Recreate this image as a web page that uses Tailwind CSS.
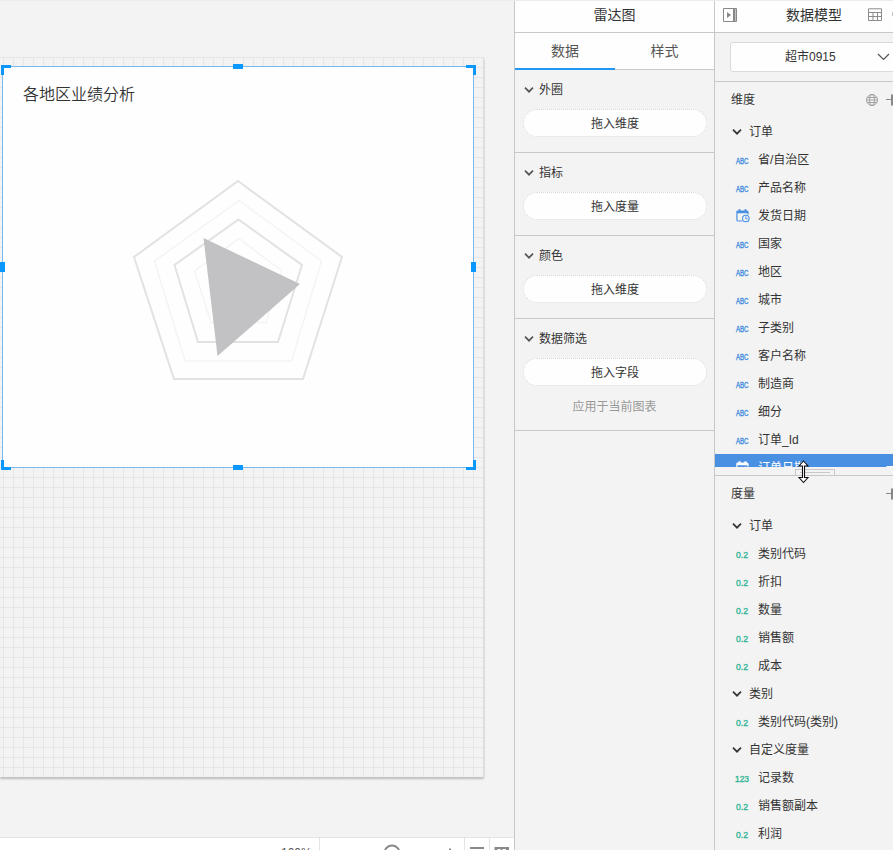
<!DOCTYPE html>
<html lang="zh-CN">
<head>
<meta charset="utf-8">
<title>雷达图</title>
<script src="https://cdn.jsdelivr.net/npm/@tailwindcss/browser@4"></script>
</head>
<body class="w-[893px] h-[850px] overflow-hidden bg-[#f3f3f3] font-['Liberation_Sans','Noto_Sans_CJK_SC',sans-serif] text-xs text-[#333]">
<svg class="hidden">
  <symbol id="chev" viewBox="0 0 10 8"><path d="M1 1.700 5 5.700 9 1.700" fill="none" stroke="currentColor" stroke-width="1.700"/></symbol>
  <symbol id="cal" viewBox="0 0 14 14"><path d="M6 12H2.200Q.9 12 .9 10.700V3Q.9 2 2 2H11Q12 2 12 3V5.500" fill="none" stroke="currentColor" stroke-width="1.200"/><path d="M1 2H12V4.300H1zM2.500.3H4.500V3H2.500zM8.500.3H10.500V3H8.500z" fill="currentColor"/><circle cx="9.800" cy="9.500" r="3.300" fill="none" stroke="currentColor" stroke-width="1.100"/><path d="M9.800 7.500V9.800H11.500" fill="none" stroke="currentColor"/></symbol>
</svg>
<div class="flex h-full border-t border-[#ececec]">
  <main class="w-[514px] shrink-0 h-[849px] flex flex-col overflow-hidden">
    <section class="relative mt-[56px] w-[484px] h-[720px] shrink-0 pt-[9px] pl-[2px] border-r border-[#dcdcdc] shadow-[0_2px_2px_rgba(0,0,0,.22)] bg-[#f3f3f3] bg-[linear-gradient(to_right,#e6e6e6_1px,transparent_1px),linear-gradient(to_bottom,#e6e6e6_1px,transparent_1px)] bg-[length:10px_10px] bg-[position:3px_0px]">
      <div class="relative w-[472px] h-[402px] bg-[#fefefe] border border-[#7ab8ee]">
        <h1 class="pl-5 pt-[16px] text-base leading-6 font-[350]">各地区业绩分析</h1>
        <svg class="block ml-[117px] mt-[63px]" width="240" height="220" viewBox="0 0 240 220" fill="none">
          <path d="M118 11 222 87 183 209H54L14 87Z" stroke="#e2e2e2" stroke-width="2"/>
          <path d="M119 30.500 201.500 91 171.500 191H65L34.500 91Z" stroke="#f3f3f3" stroke-width="1.300"/>
          <path d="M118.500 49.500 182 95 158 172H78L54.500 95Z" stroke="#e2e2e2" stroke-width="2"/>
          <path d="M119 68.500 162 101 146 152.500H91L74.500 101Z" stroke="#f3f3f3" stroke-width="1.300"/>
          <path d="M83.500 68 180 114 97.500 186Z" fill="#c2c2c4"/>
        </svg>
        <i class="absolute -left-[2px] -top-[2px] size-[10px] border-l-[3px] border-t-[3px] border-[#0a98ff]"></i>
        <i class="absolute -right-[3px] -top-[2px] size-[10px] border-r-[3px] border-t-[3px] border-[#0a98ff]"></i>
        <i class="absolute -left-[2px] -bottom-[3px] size-[10px] border-l-[3px] border-b-[3px] border-[#0a98ff]"></i>
        <i class="absolute -right-[3px] -bottom-[3px] size-[10px] border-r-[3px] border-b-[3px] border-[#0a98ff]"></i>
        <i class="absolute left-[230px] -top-[3px] w-[10px] h-[5px] bg-[#0a98ff]"></i>
        <i class="absolute left-[230px] -bottom-[3px] w-[10px] h-[5px] bg-[#0a98ff]"></i>
        <i class="absolute -left-[3px] top-[195px] w-[5px] h-[10px] bg-[#0a98ff]"></i>
        <i class="absolute -right-[3px] top-[195px] w-[5px] h-[10px] bg-[#0a98ff]"></i>
      </div>
    </section>
    <footer class="mt-auto h-[13px] shrink-0 flex bg-white border-t border-[#e3e3e3] overflow-hidden">
      <div class="w-[320px] border-r border-[#e3e3e3] pl-[281px] pt-[9px] leading-3 text-[#555]">100%</div>
      <div class="w-[145px] border-r border-[#e3e3e3]">
        <svg width="144" height="12" fill="none"><circle cx="72" cy="15" r="7.500" stroke="#8a8a8a" stroke-width="2"/><path d="M130 10.500V20" stroke="#8a8a8a" stroke-width="2"/></svg>
      </div>
      <div class="w-[25px] border-r border-[#e3e3e3]"><svg width="24" height="12"><path d="M5 9H19V11H5z" fill="#8a8a8a"/></svg></div>
      <svg width="24" height="12"><path d="M4.500 12V9H19V12H16V11H13L11.500 12.500 10 11H7.500V12z" fill="#8a8a8a"/></svg>
    </footer>
  </main>

  <aside class="w-[201px] shrink-0 h-full border-x border-[#c8c8c8]">
    <header class="h-8 bg-[#fefefe] border-b border-[#c8c8c8] text-center text-sm leading-[28px]">雷达图</header>
    <nav class="flex h-[37px] bg-[#fefefe] text-center text-sm leading-[36px] text-[#555]">
      <div class="w-[100px] border-b-2 border-[#2196f3]">数据</div>
      <div class="flex-1 border-b border-[#c8c8c8]">样式</div>
    </nav>
    <section class="h-[83px] border-b border-[#c8c8c8] pt-[10px] px-2">
      <div class="flex items-center gap-[5px] h-5 pl-px"><svg class="w-[10px] h-2 text-[#555]"><use href="#chev"/></svg>外圈</div>
      <div class="mt-[9px] h-7 -mr-px rounded-full border border-dotted border-[#d8d8d8] bg-[#fefefe] text-center leading-[29px]">拖入维度</div>
    </section>
    <section class="h-[83px] border-b border-[#c8c8c8] pt-[10px] px-2">
      <div class="flex items-center gap-[5px] h-5 pl-px"><svg class="w-[10px] h-2 text-[#555]"><use href="#chev"/></svg>指标</div>
      <div class="mt-[9px] h-7 -mr-px rounded-full border border-dotted border-[#d8d8d8] bg-[#fefefe] text-center leading-[29px]">拖入度量</div>
    </section>
    <section class="h-[83px] border-b border-[#c8c8c8] pt-[10px] px-2">
      <div class="flex items-center gap-[5px] h-5 pl-px"><svg class="w-[10px] h-2 text-[#555]"><use href="#chev"/></svg>颜色</div>
      <div class="mt-[9px] h-7 -mr-px rounded-full border border-dotted border-[#d8d8d8] bg-[#fefefe] text-center leading-[29px]">拖入维度</div>
    </section>
    <section class="h-[112px] border-b border-[#c8c8c8] pt-[10px] px-2">
      <div class="flex items-center gap-[5px] h-5 pl-px"><svg class="w-[10px] h-2 text-[#555]"><use href="#chev"/></svg>数据筛选</div>
      <div class="mt-[9px] h-7 -mr-px rounded-full border border-dotted border-[#d8d8d8] bg-[#fefefe] text-center leading-[29px]">拖入字段</div>
      <p class="mt-[11px] text-center leading-5 text-[#999]">应用于当前图表</p>
    </section>
  </aside>

  <aside class="w-[178px] shrink-0 h-[849px] overflow-hidden">
    <header class="h-8 bg-[#fefefe] border-b border-[#c8c8c8] flex items-center overflow-hidden text-sm">
      <svg class="ml-2 -mt-[3px] shrink-0" width="14" height="14" fill="none"><path d="M.5.5H13.500V13.500H.5z" stroke="#888"/><path d="M10 0H12.500V14H10zM4 4 8 7 4 10z" fill="#888"/></svg>
      <span class="ml-[49px] -mt-[4px] shrink-0">数据模型</span>
      <svg class="ml-[26px] -mt-[3px] shrink-0" width="14" height="14" fill="none" stroke="#8c8c8c"><path d="M.5.800H13.500V12.500H.5zM.5 4.500H13.500M.5 8.500H13.500M5 4.500V12.500M9.500 4.500V12.500"/></svg>
      <svg class="ml-[10px] -mt-[4px] shrink-0" width="8" height="14" fill="none"><circle cx="4" cy="6" r="3" stroke="#999" stroke-width="1.500"/></svg>
    </header>
    <div class="h-[49px] border-b border-[#c8c8c8] pt-[9px] pl-[15px]">
      <div class="w-[180px] h-[30px] rounded-[3px] border border-[#dadada] bg-[#fefefe] flex items-center">
        <span class="ml-[54px]">超市0915</span>
        <svg class="ml-[41px]" width="13" height="8" fill="none"><path d="M1 1 6.500 6.500 12 1" stroke="#555" stroke-width="1.200"/></svg>
      </div>
    </div>
    <div class="h-[385px] overflow-hidden">
      <div class="h-9 flex items-center pl-4"><span class="shrink-0">维度</span>
        <svg class="ml-[111px] shrink-0" width="12" height="12" fill="none" stroke="#999" stroke-width=".9"><circle cx="6" cy="6" r="5.500"/><ellipse cx="6" cy="6" rx="2.500" ry="5.500"/><path d="M.5 6H11.500M1.500 3.500H10.500M1.500 8.500H10.500"/></svg>
        <svg class="ml-2 shrink-0" width="12" height="12" fill="none" stroke="#888"><path d="M0 5.500H12"/><path d="M6 .5V11.500" stroke-width="2"/></svg>
      </div>
      <div id="dimensions"></div>
    </div>
    <div class="relative h-[9px] border-b border-[#c8c8c8] pl-20 pt-[2px]">
      <div class="w-10 h-[7px] border border-[#c8c8c8] px-1 pt-[2px]"><div class="border-t border-[#c8c8c8]"></div></div>
      <svg class="absolute left-[82px] -top-[8px]" width="13" height="26" viewBox="0 0 13 26"><path d="M6.500 2 11 7H7.500V18.500H11L6.500 23.500 2 18.500H5.500V7H2Z" fill="white" stroke="#111" stroke-width="1.100"/></svg>
    </div>
    <div class="h-9 flex items-center pl-4"><span class="shrink-0">度量</span>
      <svg class="ml-[131px] shrink-0" width="12" height="12" fill="none" stroke="#888"><path d="M0 5.500H12"/><path d="M6 .5V11.500" stroke-width="2"/></svg>
    </div>
    <div id="measures"></div>
  </aside>
</div>
<script>
const group = n => `<div class="h-7 flex items-center pl-[17px] pb-px whitespace-nowrap"><svg class="w-[10px] h-2 shrink-0"><use href="#chev"/></svg><span class="ml-[7px]">${n}</span></div>`;
const icons = {
  abc: '<svg class="w-4 h-4 shrink-0"><text class="fill-[#4a90e2] text-[9.5px]" x="1" y="12" textLength="12.500" lengthAdjust="spacingAndGlyphs" stroke="#4a90e2" stroke-width=".45">ABC</text></svg>',
  num: '<svg class="w-4 h-4 shrink-0"><text class="fill-[#35b797] text-[9.5px]" x="1" y="11.500" textLength="12" lengthAdjust="spacingAndGlyphs" stroke="#35b797" stroke-width=".4">0.2</text></svg>',
  int: '<svg class="w-4 h-4 shrink-0"><text class="fill-[#35b797] text-[9.5px]" x="0" y="11.500" textLength="14" lengthAdjust="spacingAndGlyphs" stroke="#35b797" stroke-width=".4">123</text></svg>',
  cal: '<span class="w-4 h-4 shrink-0 pl-px pt-px text-[#4a90e2]"><svg class="size-[14px]"><use href="#cal"/></svg></span>',
  calw: '<span class="w-4 h-4 shrink-0 pl-px pt-px text-white"><svg class="size-[14px]"><use href="#cal"/></svg></span>'
};
const item = (t, n) => `<div class="h-7 flex items-center pl-5 pb-px whitespace-nowrap">${icons[t]}<span class="ml-[7px]">${n}</span></div>`;
document.getElementById('dimensions').innerHTML = group('订单') +
  [['abc','省/自治区'],['abc','产品名称'],['cal','发货日期'],['abc','国家'],['abc','地区'],['abc','城市'],['abc','子类别'],['abc','客户名称'],['abc','制造商'],['abc','细分'],['abc','订单_Id']].map(r => item(...r)).join('') +
  `<div class="h-7 flex items-center pl-5 pb-px whitespace-nowrap bg-[#4a90e2] text-white">${icons.calw}<span class="ml-[7px]">订单日期</span><svg class="ml-auto w-[7px] h-1"><path d="M0 0H8L4 4z" fill="white"/></svg></div>`;
document.getElementById('measures').innerHTML = group('订单') +
  [['num','类别代码'],['num','折扣'],['num','数量'],['num','销售额'],['num','成本']].map(r => item(...r)).join('') +
  group('类别') + item('num','类别代码(类别)') + group('自定义度量') +
  [['int','记录数'],['num','销售额副本'],['num','利润']].map(r => item(...r)).join('');
</script>
</body>
</html>
